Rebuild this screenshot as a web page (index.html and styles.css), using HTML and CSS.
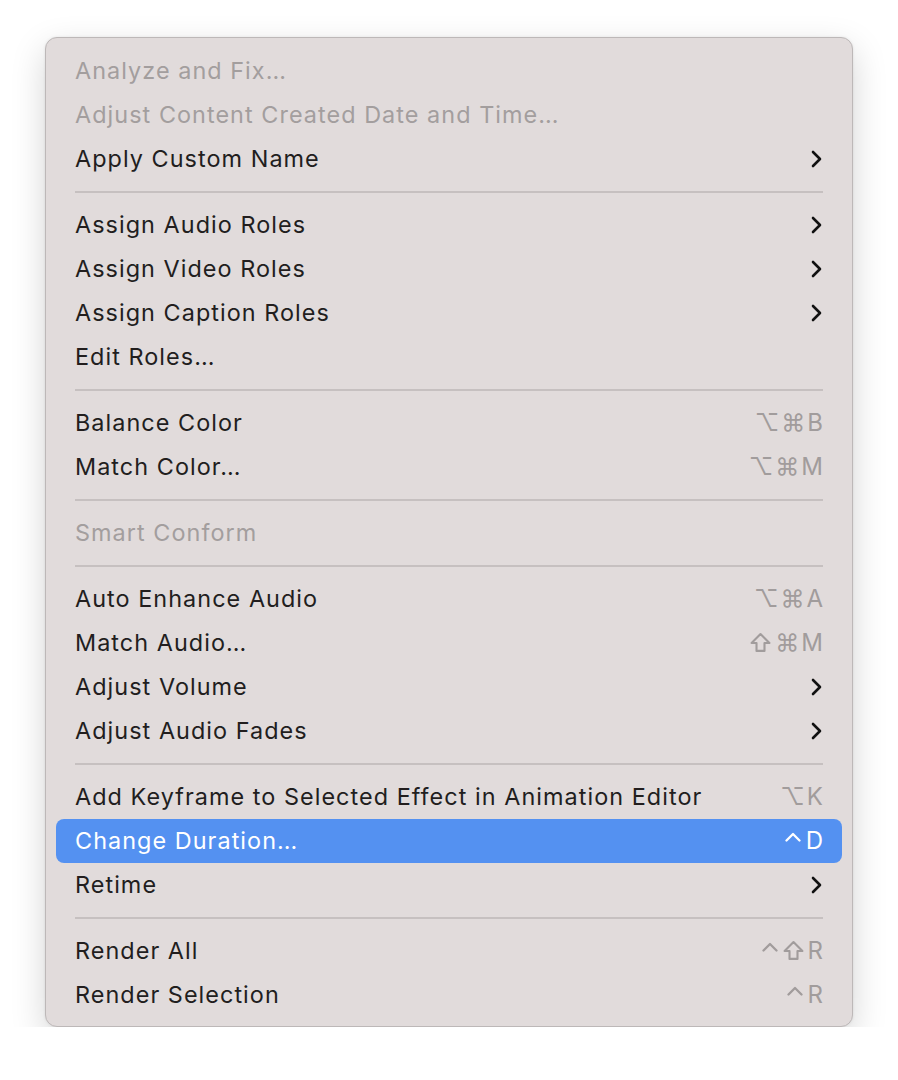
FILE: index.html
```html
<!DOCTYPE html>
<html>
<head>
<meta charset="utf-8">
<link rel="stylesheet" href="styles.css">
</head>
<body>
<div class="menu">
  <div class="item disabled"><span class="label">Analyze and Fix…</span></div>
  <div class="item disabled"><span class="label">Adjust Content Created Date and Time…</span></div>
  <div class="item"><span class="label">Apply Custom Name</span><svg class="chev" viewBox="0 0 12 18"><polyline points="2,2 9,9 2,16"/></svg></div>
  <div class="sep"></div>
  <div class="item"><span class="label">Assign Audio Roles</span><svg class="chev" viewBox="0 0 12 18"><polyline points="2,2 9,9 2,16"/></svg></div>
  <div class="item"><span class="label">Assign Video Roles</span><svg class="chev" viewBox="0 0 12 18"><polyline points="2,2 9,9 2,16"/></svg></div>
  <div class="item"><span class="label">Assign Caption Roles</span><svg class="chev" viewBox="0 0 12 18"><polyline points="2,2 9,9 2,16"/></svg></div>
  <div class="item"><span class="label">Edit Roles…</span></div>
  <div class="sep"></div>
  <div class="item"><span class="label">Balance Color</span><span class="key">⌥⌘B</span></div>
  <div class="item"><span class="label">Match Color…</span><span class="key">⌥⌘M</span></div>
  <div class="sep"></div>
  <div class="item disabled"><span class="label">Smart Conform</span></div>
  <div class="sep"></div>
  <div class="item"><span class="label">Auto Enhance Audio</span><span class="key">⌥⌘A</span></div>
  <div class="item"><span class="label">Match Audio…</span><span class="key"><svg class="shift" viewBox="0 0 20 20"><path d="M10 2 L18.5 10.5 H13.8 V18 H6.2 V10.5 H1.5 Z"/></svg>⌘M</span></div>
  <div class="item"><span class="label">Adjust Volume</span><svg class="chev" viewBox="0 0 12 18"><polyline points="2,2 9,9 2,16"/></svg></div>
  <div class="item"><span class="label">Adjust Audio Fades</span><svg class="chev" viewBox="0 0 12 18"><polyline points="2,2 9,9 2,16"/></svg></div>
  <div class="sep"></div>
  <div class="item"><span class="label">Add Keyframe to Selected Effect in Animation Editor</span><span class="key">⌥K</span></div>
  <div class="item active"><span class="label">Change Duration…</span><span class="key"><svg class="ctrl" viewBox="0 0 16 20"><polyline points="1.5,9.5 8,3 14.5,9.5"/></svg>D</span></div>
  <div class="item"><span class="label">Retime</span><svg class="chev" viewBox="0 0 12 18"><polyline points="2,2 9,9 2,16"/></svg></div>
  <div class="sep"></div>
  <div class="item"><span class="label">Render All</span><span class="key"><svg class="ctrl" viewBox="0 0 16 20"><polyline points="1.5,9.5 8,3 14.5,9.5"/></svg><svg class="shift" viewBox="0 0 20 20"><path d="M10 2 L18.5 10.5 H13.8 V18 H6.2 V10.5 H1.5 Z"/></svg>R</span></div>
  <div class="item"><span class="label">Render Selection</span><span class="key"><svg class="ctrl" viewBox="0 0 16 20"><polyline points="1.5,9.5 8,3 14.5,9.5"/></svg>R</span></div>
</div>
</body>
</html>
```
FILE: styles.css
```css
html, body {
  margin: 0;
  padding: 0;
  background: #ffffff;
}
body {
  padding: 37px 0 0 45px;
  font-family: Inter, "Noto Sans", "DejaVu Sans", sans-serif;
}
.menu {
  box-sizing: content-box;
  width: 786px;
  background: #e1dbdb;
  border: 1px solid #bdb8b8;
  border-radius: 12px;
  padding: 11px 10px 9px 10px;
  box-shadow: 0 12px 34px rgba(0,0,0,0.17), 0 0 3px rgba(0,0,0,0.08);
}
.item {
  height: 44px;
  box-sizing: border-box;
  display: flex;
  align-items: center;
  justify-content: space-between;
  padding: 0 19px 2px 19px;
  border-radius: 8px;
  color: #221e1e;
  font-size: 23.4px;
  letter-spacing: 1.05px;
}
.item.disabled { color: #a39e9e; }
.item.active {
  background: #5491f1;
  color: #ffffff;
}
.key {
  display: flex;
  align-items: center;
  gap: 5px;
  color: #a19c9c;
  font-family: Inter, "DejaVu Sans", sans-serif;
  font-size: 24px;
  letter-spacing: 2px;
  margin-right: -2px;
}
.item.active .key { color: #ffffff; }
.ctrl {
  width: 16px;
  height: 20px;
  margin-top: 1px;
}
.ctrl polyline {
  fill: none;
  stroke: currentColor;
  stroke-width: 2.3;
  stroke-linecap: round;
  stroke-linejoin: round;
}
.shift {
  width: 21px;
  height: 21px;
  margin-top: 1px;
  margin-right: -1px;
}
.shift path {
  fill: none;
  stroke: currentColor;
  stroke-width: 2;
  stroke-linejoin: round;
}
.chev {
  width: 12px;
  height: 18px;
  margin-top: 2px;
}
.chev polyline {
  fill: none;
  stroke: #111;
  stroke-width: 2.6;
  stroke-linecap: round;
  stroke-linejoin: round;
}
.sep {
  height: 22px;
  display: flex;
  align-items: center;
  padding: 0 19px;
}
.sep::before {
  content: "";
  display: block;
  height: 2px;
  flex: 1;
  background: #c6c0c0;
}
```
